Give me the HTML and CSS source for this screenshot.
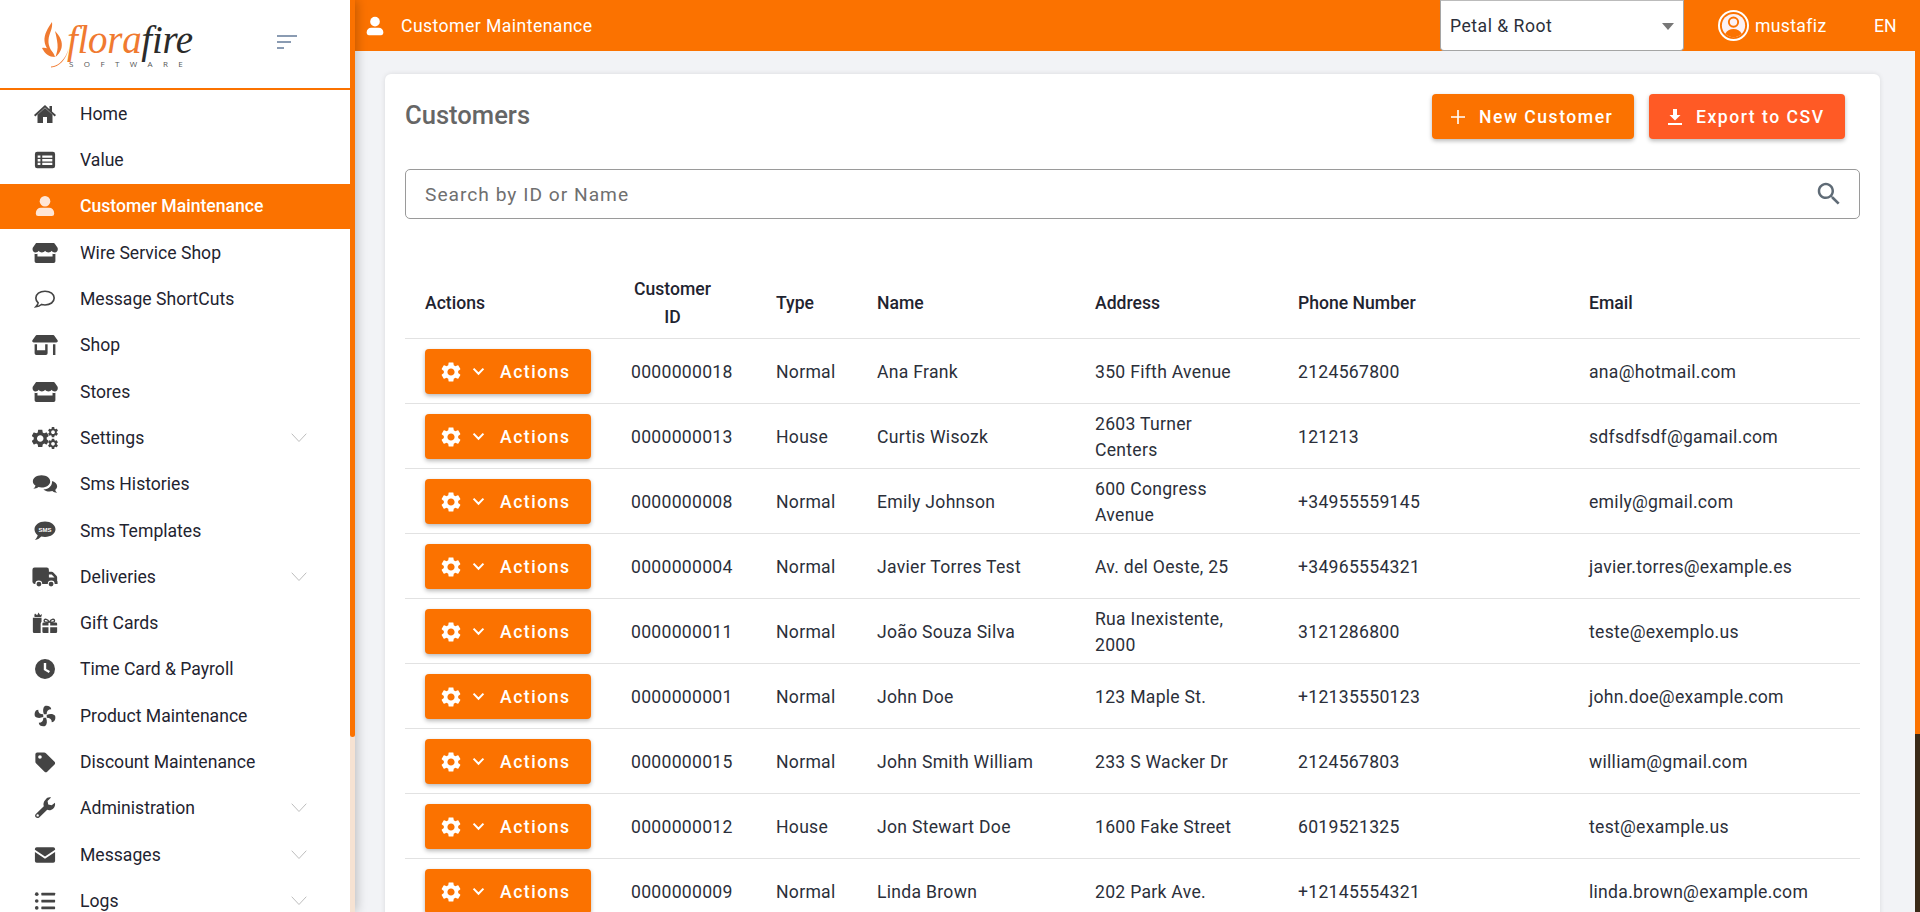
FILE: index.html
```html
<!DOCTYPE html>
<html lang="en">
<head>
<meta charset="utf-8">
<title>Customer Maintenance</title>
<link rel="stylesheet" href="styles.css">
</head>
<body>
<svg class="defs" aria-hidden="true">
  <symbol id="gear" viewBox="0 0 24 24"><path d="M19.14 12.94c.04-.3.06-.61.06-.94 0-.32-.02-.64-.07-.94l2.03-1.58c.18-.14.23-.41.12-.61l-1.92-3.32c-.12-.22-.37-.29-.59-.22l-2.39.96c-.5-.38-1.03-.7-1.62-.94l-.36-2.54c-.04-.24-.24-.41-.48-.41h-3.84c-.24 0-.43.17-.47.41l-.36 2.54c-.59.24-1.13.57-1.62.94l-2.39-.96c-.22-.08-.47 0-.59.22L2.74 8.87c-.12.21-.08.47.12.61l2.03 1.58c-.05.3-.09.63-.09.94s.02.64.07.94l-2.03 1.58c-.18.14-.23.41-.12.61l1.92 3.32c.12.22.37.29.59.22l2.39-.96c.5.38 1.03.7 1.62.94l.36 2.54c.05.24.24.41.48.41h3.84c.24 0 .44-.17.47-.41l.36-2.54c.59-.24 1.13-.56 1.62-.94l2.39.96c.22.08.47 0 .59-.22l1.92-3.32c.12-.22.07-.47-.12-.61l-2.01-1.58zM12 15.6c-1.98 0-3.6-1.62-3.6-3.6s1.62-3.6 3.6-3.6 3.6 1.62 3.6 3.6-1.62 3.6-3.6 3.6z"/></symbol>
  <symbol id="home" viewBox="0 0 24 24"><path d="M10 21v-6h4v6h5.500v-8.200L12 6 4.500 12.800V21zM12 3 1 13l1.300 1.400L12 5.600l9.700 8.800L23 13l-4-3.600V4h-2.500v3.200z"/></symbol>
  <symbol id="listalt" viewBox="0 0 24 24"><path fill-rule="evenodd" d="M3.500 3h17A2.500 2.500 0 0 1 23 5.500v13a2.500 2.500 0 0 1-2.500 2.500h-17A2.500 2.500 0 0 1 1 18.500v-13A2.500 2.500 0 0 1 3.500 3zM4 7v2.500h3V7zm5 0v2.500h11V7zm-5 4v2.500h3V11zm5 0v2.500h11V11zm-5 4v2.500h3V15zm5 0v2.500h11V15z"/></symbol>
  <symbol id="person" viewBox="0 0 24 24"><circle cx="12" cy="6.800" r="5.800"/><path d="M7.500 14h9a5.500 5.500 0 0 1 5.500 5.500v1A2.500 2.500 0 0 1 19.500 23h-15A2.500 2.500 0 0 1 2 20.500v-1A5.500 5.500 0 0 1 7.500 14z"/></symbol>
  <symbol id="store" viewBox="0 0 30 24"><path d="M5 .5h20a1.500 1.500 0 0 1 1.300.7L29.500 6c.9 2.600-.6 5.300-3 5.500-1.700.1-3-.7-3.800-2-.8 1.300-2.200 2-3.700 2s-3-.8-3.900-2c-.8 1.200-2.200 2-3.700 2s-2.900-.8-3.700-2c-.8 1.300-2.100 2.100-3.800 2-2.400-.2-3.900-2.900-3-5.500l3.200-4.800A1.500 1.500 0 0 1 5 .5z"/><path d="M3 13c1 .3 2.300.3 3.300-.1V16h17.400v-3.100c1 .4 2.300.4 3.300.1v8.500a2 2 0 0 1-2 2H5a2 2 0 0 1-2-2z"/></symbol>
  <symbol id="shop" viewBox="0 0 30 24"><path d="M5.500 .5h19a1.500 1.500 0 0 1 1.300.7l3.700 5.300c.6 1.300 0 2.500-1.500 2.500H2c-1.500 0-2.100-1.200-1.500-2.500l3.700-5.300A1.500 1.500 0 0 1 5.500 .5z"/><path d="M3 11h2.800v7.200h9.400V11H18v10.500a2 2 0 0 1-2 2H5a2 2 0 0 1-2-2zM24.200 11H27v12.500h-2.800z"/></symbol>
  <symbol id="comment" viewBox="0 0 24 24"><path fill="none" stroke="currentColor" stroke-width="1.800" d="M12 3.500c5.800 0 10 3.200 10 7.500s-4.200 7.500-10 7.500c-1.400 0-2.700-.2-3.900-.5-1.500 1.300-3.600 2.300-6.100 2.500 1.300-1.300 2.200-2.700 2.500-4.300C3 14.800 2 13 2 11c0-4.300 4.200-7.500 10-7.500z"/></symbol>
  <symbol id="cogs" viewBox="0 0 30 24"><svg x="-3" y="0" width="25" height="25" viewBox="0 0 24 24"><use href="#gear"/></svg><svg x="17" y="-2" width="14.500" height="14.500" viewBox="0 0 24 24"><use href="#gear"/></svg><svg x="17" y="11.500" width="14.500" height="14.500" viewBox="0 0 24 24"><use href="#gear"/></svg></symbol>
  <symbol id="comments" viewBox="0 0 30 24"><path d="M11 2c6 0 10 3.200 10 7s-4 7-10 7c-1.300 0-2.400-.2-3.500-.5C6 16.700 4 17.500 1.500 17.500 3 16.300 3.800 15 4 13.700 2.200 12.500 1 10.800 1 9c0-3.800 4-7 10-7z"/><path d="M23 8.500c3.400 1 6 3.300 6 6.200 0 1.600-.8 3-2.200 4.100.2 1.100 1 2.300 2.200 3.400-2.300 0-4.200-.9-5.500-2-1 .3-2.200.5-3.300.5-2.900 0-5.400-.9-7.100-2.400 6.300-.2 10.900-4.300 9.900-10.300z"/></symbol>
  <symbol id="truck" viewBox="0 0 30 24"><path d="M3 1h14a2.500 2.500 0 0 1 2.500 2.500V6h3.300c.7 0 1.300.3 1.800.8l3.600 3.700c.5.500.8 1.200.8 1.800V17h.5v3h-3.300a4 4 0 0 0-8 0h-6.400a4 4 0 0 0-8 0H3a2.500 2.500 0 0 1-2.500-2.500v-14A2.500 2.500 0 0 1 3 1zm16.500 8v3.500H26L22.700 9z"/><circle cx="8" cy="20.200" r="2.800"/><circle cx="22" cy="20.200" r="2.800"/></symbol>
  <symbol id="gifts" viewBox="0 0 30 24"><path d="M1 6h10v4.500c-.6.700-1 1.500-1 2.500v10.500H2.500A1.500 1.500 0 0 1 1 22z"/><path d="M3 5c-.5-1.500-.3-3 .5-4l2.500 2 1.500-3 2 3 1.500-1.500c.4 1.300.3 2.500-.5 3.500z"/><path d="M12 17h7v6.500h-5.500A1.500 1.500 0 0 1 12 22zM21 17h8v5a1.500 1.500 0 0 1-1.500 1.500H21zM12 13a1.500 1.500 0 0 1 1.500-1.500H19V15h-7zM21 11.500h6.500A1.500 1.500 0 0 1 29 13v2h-8z"/><path fill="none" stroke="currentColor" stroke-width="1.600" d="M19.800 11c-1.500-3.800-5.500-4.300-5.800-1.800-.2 1.800 3 2.300 5.800 1.800zM20.200 11c1.500-3.800 5.500-4.300 5.800-1.800.2 1.800-3 2.300-5.800 1.800z"/></symbol>
  <symbol id="clock" viewBox="0 0 24 24"><path fill-rule="evenodd" d="M12 2a10 10 0 1 1 0 20 10 10 0 0 1 0-20zm-1.200 4v7l5 3 1.200-1.900-3.800-2.200V6z"/></symbol>
  <symbol id="fan" viewBox="0 0 24 24"><path d="M10.800 10.200C9.500 6.500 9.500 3 11.800 1c3-.9 7 .2 7 3.600-3.300 0-5 1.900-5 5.400z"/><path d="M13.800 10.800c3.700-1.300 7.200-1.300 9.200 1 .9 3-.2 7-3.600 7 0-3.300-1.900-5-5.400-5zM13.200 13.800c1.300 3.700 1.300 7.200-1 9.200-3 .9-7-.2-7-3.600 3.300 0 5-1.900 5-5.400zM10.200 13.200c-3.700 1.300-7.200 1.300-9.200-1-.9-3 .2-7 3.600-7 0 3.300 1.900 5 5.400 5z"/></symbol>
  <symbol id="tag" viewBox="0 0 24 24"><path fill-rule="evenodd" d="M3.500 1.500H11c.8 0 1.500.3 2 .9l9.400 9.400c.8.8.8 2.100 0 2.900l-8 8c-.8.800-2.100.8-2.900 0L2.400 13.600c-.6-.5-.9-1.200-.9-2V3.500a2 2 0 0 1 2-2zM6.500 4.500a2 2 0 1 0 0 4 2 2 0 0 0 0-4z"/></symbol>
  <symbol id="wrench" viewBox="0 0 24 24"><path fill-rule="evenodd" d="M22.800 6.200c.6 2.200 0 4.600-1.700 6.300-1.800 1.800-4.400 2.400-6.700 1.500l-8.700 8.300c-1.100 1-2.800 1-3.800-.1-1-1-1-2.700.1-3.700l8.700-8.400c-.9-2.400-.2-5 1.600-6.800C14 .6 16.400 0 18.600.6l-3.800 3.800.7 3.800 3.800.7zM4 18.800a1.300 1.300 0 1 0 0 2.600 1.300 1.300 0 0 0 0-2.600z"/></symbol>
  <symbol id="mail" viewBox="0 0 24 24"><path d="M3 3.500h18A2 2 0 0 1 23 5.500v.7L12 13.500 1 6.200v-.7a2 2 0 0 1 2-2zM1 8.700l11 7.300 11-7.300v9.800a2 2 0 0 1-2 2H3a2 2 0 0 1-2-2z"/></symbol>
  <symbol id="list" viewBox="0 0 24 24"><circle cx="3" cy="4.500" r="2"/><circle cx="3" cy="12" r="2"/><circle cx="3" cy="19.500" r="2"/><rect x="8" y="3" width="15" height="3" rx=".5"/><rect x="8" y="10.500" width="15" height="3" rx=".5"/><rect x="8" y="18" width="15" height="3" rx=".5"/></symbol>
  <symbol id="chev" viewBox="0 0 16 10"><path fill="none" stroke="currentColor" stroke-width="1" d="M.7 .7 8 8.500 15.300 .7"/></symbol>
  <symbol id="chevbold" viewBox="0 0 14 10"><path fill="none" stroke="currentColor" stroke-width="2.200" d="M1.500 1.800 7 7.500l5.500-5.700"/></symbol>
  <symbol id="plus" viewBox="0 0 14 14"><path d="M6.200 0h1.600v6.200H14v1.600H7.800V14H6.200V7.800H0V6.200h6.200z"/></symbol>
  <symbol id="download" viewBox="0 0 14 16"><path d="M5 0h4v6h3.500L7 11.500 1.500 6H5zM0 14h14v2H0z"/></symbol>
  <symbol id="search" viewBox="0 0 24 24"><path d="M15.500 14h-.79l-.28-.27C15.410 12.590 16 11.110 16 9.500 16 5.910 13.090 3 9.500 3S3 5.910 3 9.500 5.910 16 9.500 16c1.610 0 3.090-.59 4.230-1.570l.27.28v.79l5 4.990L20.490 19l-4.990-5zm-6 0C7.010 14 5 11.990 5 9.500S7.010 5 9.500 5 14 7.010 14 9.500 11.990 14 9.500 14z"/></symbol>
</svg>

<div class="app">
  <aside class="sidebar">
    <div class="side-body">
      <div class="brand">
        <div class="logo">
          <svg class="flame" viewBox="0 0 27 46"><path d="M10 0C6 6 2 12 2.500 19 3 25 7 30 12 33 9 28 6 24 6.500 18 7 11 11 7 10 0z"/><path d="M13 9c5 5 8 11 6.500 17-1 4-3.500 7-6 9 1.500-5 2.500-8 2-13-.5-5-1.500-9-2.500-13z"/><path d="M0 26c5-1 11 2 13 9-6 0-10-3-13-9z"/><path d="M9 44.500c6-.5 12-4.500 16-13.500l1.500-4C24 38 17 45 9 45.500z"/></svg>
          <div class="logo-words">
            <div class="logo-name"><span class="flora">flora</span><span class="fire">fire</span></div>
            <div class="logo-sub">SOFTWARE</div>
          </div>
        </div>
        <div class="toggler"><span class="bar-a"></span><span class="bar-b"></span><span class="bar-c"></span></div>
      </div>
      <nav class="menu">
        <a class="item"><span class="ico"><svg class="i24"><use href="#home"/></svg></span><span class="label">Home</span></a>
        <a class="item"><span class="ico"><svg class="i22"><use href="#listalt"/></svg></span><span class="label">Value</span></a>
        <a class="item active"><span class="ico"><svg class="i22"><use href="#person"/></svg></span><span class="label">Customer Maintenance</span></a>
        <a class="item"><span class="ico"><svg class="i-wide"><use href="#store"/></svg></span><span class="label">Wire Service Shop</span></a>
        <a class="item"><span class="ico"><svg class="i22"><use href="#comment"/></svg></span><span class="label">Message ShortCuts</span></a>
        <a class="item"><span class="ico"><svg class="i-wide"><use href="#shop"/></svg></span><span class="label">Shop</span></a>
        <a class="item"><span class="ico"><svg class="i-wide"><use href="#store"/></svg></span><span class="label">Stores</span></a>
        <a class="item"><span class="ico"><svg class="i-wide"><use href="#cogs"/></svg></span><span class="label">Settings</span><svg class="chev"><use href="#chev"/></svg></a>
        <a class="item"><span class="ico"><svg class="i-wide"><use href="#comments"/></svg></span><span class="label">Sms Histories</span></a>
        <a class="item"><span class="ico"><svg class="i24" viewBox="0 0 24 24"><path d="M12 2.500c5.800 0 10.500 3.500 10.500 7.800S17.800 18 12 18c-1.300 0-2.500-.2-3.700-.5C6.800 19 5 20.500 1.800 21c1.400-1.300 2.500-3 2.900-4.800-2-1.400-3.200-3.500-3.200-5.900 0-4.300 4.700-7.800 10.500-7.800z"/><text x="12" y="12.700" text-anchor="middle" class="smstext">SMS</text></svg></span><span class="label">Sms Templates</span></a>
        <a class="item"><span class="ico"><svg class="i-wide"><use href="#truck"/></svg></span><span class="label">Deliveries</span><svg class="chev"><use href="#chev"/></svg></a>
        <a class="item"><span class="ico"><svg class="i-wide"><use href="#gifts"/></svg></span><span class="label">Gift Cards</span></a>
        <a class="item"><span class="ico"><svg class="i24"><use href="#clock"/></svg></span><span class="label">Time Card &amp; Payroll</span></a>
        <a class="item"><span class="ico"><svg class="i22"><use href="#fan"/></svg></span><span class="label">Product Maintenance</span></a>
        <a class="item"><span class="ico"><svg class="i22"><use href="#tag"/></svg></span><span class="label">Discount Maintenance</span></a>
        <a class="item"><span class="ico"><svg class="i22"><use href="#wrench"/></svg></span><span class="label">Administration</span><svg class="chev"><use href="#chev"/></svg></a>
        <a class="item"><span class="ico"><svg class="i22"><use href="#mail"/></svg></span><span class="label">Messages</span><svg class="chev"><use href="#chev"/></svg></a>
        <a class="item"><span class="ico"><svg class="i22"><use href="#list"/></svg></span><span class="label">Logs</span><svg class="chev"><use href="#chev"/></svg></a>
      </nav>
    </div>
    <div class="side-scroll"><div class="side-thumb"></div></div>
  </aside>

  <div class="main">
    <header class="topbar">
      <svg class="top-ico"><use href="#person"/></svg>
      <span class="top-title">Customer Maintenance</span>
      <div class="shop-select"><span>Petal &amp; Root</span><i class="caret"></i></div>
      <div class="user">
        <svg class="avatar" viewBox="0 0 32 32"><circle cx="16" cy="16" r="15" class="av-ring"/><circle cx="16" cy="16" r="12" class="av-fill"/><path class="av-body" d="M7.500 24.500c1.500-3.500 4.700-5 8.500-5s7 1.500 8.500 5c-2.200 2.200-5.200 3.500-8.500 3.500s-6.300-1.300-8.500-3.500z"/><circle cx="16" cy="12.500" r="4.800" class="av-head"/></svg>
        <span>mustafiz</span>
      </div>
      <span class="lang">EN</span>
    </header>

    <section class="content">
      <div class="card">
        <div class="card-head">
          <h1 class="card-title">Customers</h1>
          <button class="btn btn-orange"><svg class="btn-ico"><use href="#plus"/></svg>New Customer</button>
          <button class="btn btn-red"><svg class="btn-ico"><use href="#download"/></svg>Export to CSV</button>
        </div>
        <div class="search">
          <input class="search-input" type="text" placeholder="Search by ID or Name">
          <svg class="search-ico"><use href="#search"/></svg>
        </div>
        <table class="table">
          <colgroup><col class="c1"><col class="c2"><col class="c3"><col class="c4"><col class="c5"><col class="c6"><col class="c7"></colgroup>
          <thead>
            <tr><th>Actions</th><th><span class="cid">Customer<br>ID</span></th><th>Type</th><th>Name</th><th>Address</th><th>Phone Number</th><th>Email</th></tr>
          </thead>
          <tbody>
            <tr><td><button class="act"><svg class="act-gear"><use href="#gear"/></svg><svg class="act-chev"><use href="#chevbold"/></svg>Actions</button></td><td>0000000018</td><td>Normal</td><td>Ana Frank</td><td><div class="addr">350 Fifth Avenue</div></td><td>2124567800</td><td>ana@hotmail.com</td></tr>
            <tr><td><button class="act"><svg class="act-gear"><use href="#gear"/></svg><svg class="act-chev"><use href="#chevbold"/></svg>Actions</button></td><td>0000000013</td><td>House</td><td>Curtis Wisozk</td><td><div class="addr">2603 Turner Centers</div></td><td>121213</td><td>sdfsdfsdf@gamail.com</td></tr>
            <tr><td><button class="act"><svg class="act-gear"><use href="#gear"/></svg><svg class="act-chev"><use href="#chevbold"/></svg>Actions</button></td><td>0000000008</td><td>Normal</td><td>Emily Johnson</td><td><div class="addr">600 Congress Avenue</div></td><td>+34955559145</td><td>emily@gmail.com</td></tr>
            <tr><td><button class="act"><svg class="act-gear"><use href="#gear"/></svg><svg class="act-chev"><use href="#chevbold"/></svg>Actions</button></td><td>0000000004</td><td>Normal</td><td>Javier Torres Test</td><td><div class="addr">Av. del Oeste, 25</div></td><td>+34965554321</td><td>javier.torres@example.es</td></tr>
            <tr><td><button class="act"><svg class="act-gear"><use href="#gear"/></svg><svg class="act-chev"><use href="#chevbold"/></svg>Actions</button></td><td>0000000011</td><td>Normal</td><td>João Souza Silva</td><td><div class="addr">Rua Inexistente, 2000</div></td><td>3121286800</td><td>teste@exemplo.us</td></tr>
            <tr><td><button class="act"><svg class="act-gear"><use href="#gear"/></svg><svg class="act-chev"><use href="#chevbold"/></svg>Actions</button></td><td>0000000001</td><td>Normal</td><td>John Doe</td><td><div class="addr">123 Maple St.</div></td><td>+12135550123</td><td>john.doe@example.com</td></tr>
            <tr><td><button class="act"><svg class="act-gear"><use href="#gear"/></svg><svg class="act-chev"><use href="#chevbold"/></svg>Actions</button></td><td>0000000015</td><td>Normal</td><td>John Smith William</td><td><div class="addr">233 S Wacker Dr</div></td><td>2124567803</td><td>william@gmail.com</td></tr>
            <tr><td><button class="act"><svg class="act-gear"><use href="#gear"/></svg><svg class="act-chev"><use href="#chevbold"/></svg>Actions</button></td><td>0000000012</td><td>House</td><td>Jon Stewart Doe</td><td><div class="addr">1600 Fake Street</div></td><td>6019521325</td><td>test@example.us</td></tr>
            <tr><td><button class="act"><svg class="act-gear"><use href="#gear"/></svg><svg class="act-chev"><use href="#chevbold"/></svg>Actions</button></td><td>0000000009</td><td>Normal</td><td>Linda Brown</td><td><div class="addr">202 Park Ave.</div></td><td>+12145554321</td><td>linda.brown@example.com</td></tr>
          </tbody>
        </table>
      </div>
    </section>
  </div>
  <div class="page-scroll"><div class="page-thumb"></div></div>
</div>
</body>
</html>
```

FILE: styles.css
```css
* { box-sizing: border-box; }
html, body { margin: 0; height: 100%; overflow: hidden; }
body { font-family: Roboto, "Liberation Sans", sans-serif; font-size: 17.6px; color: #1f2430; background: #f2f3f6; }
button { font-family: inherit; border: 0; cursor: pointer; }

.defs { position: absolute; width: 0; height: 0; overflow: hidden; }
.smstext { font: 700 6px "Liberation Sans", sans-serif; fill: #fff; }

.app { display: flex; height: 912px; overflow: hidden; }

/* sidebar */
.sidebar { display: flex; flex: 0 0 355px; height: 912px; background: #fff; box-shadow: 2px 0 10px rgba(0,0,0,.22); position: relative; z-index: 2; }
.side-body { width: 350px; flex: 0 0 350px; overflow: hidden; }
.side-scroll { flex: 0 0 5px; background: #f6e2d2; }
.side-thumb { height: 737px; background: #fb7200; border-radius: 0 0 3px 3px; }
.brand { height: 90px; border-bottom: 2px solid #fb7200; display: flex; align-items: flex-start; padding-left: 42px; }
.logo { display: flex; width: 235px; padding-top: 22px; }
.flame { width: 27px; height: 46px; fill: #f07a30; flex: 0 0 27px; }
.logo-words { margin-left: -2px; }
.logo-name { font: italic 400 39px/36px "Liberation Serif", serif; letter-spacing: -.3px; height: 37px; white-space: nowrap; }
.flora { color: #f07a30; }
.fire { color: #2b2b2b; }
.logo-sub { font: 400 8px/9px "Open Sans", sans-serif; letter-spacing: 10.400px; color: #555; white-space: nowrap; margin-left: 2px; }
.toggler { display: flex; flex-direction: column; gap: 4px; margin-top: 35px; }
.toggler span { display: block; height: 2px; background: #8a9bb2; }
.bar-a { width: 20px; }
.bar-b { width: 14px; }
.bar-c { width: 7px; }

.menu { padding-top: 1.4px; }
.item { display: flex; align-items: center; height: 45px; margin-bottom: 1.3px; color: #1f2430; }
.ico { flex: 0 0 80px; display: flex; justify-content: center; padding-left: 10px; }
.ico svg { display: block; fill: #444; color: #444; }
.i24 { width: 24px; height: 24px; }
.i22 { width: 22px; height: 22px; }
.i-wide { width: 26px; height: 22px; }
.label { flex: 1; }
.chev { width: 16px; height: 10px; color: #bdbdbd; margin-right: 43px; }
.item.active { background: #fb7200; color: #fff; font-weight: 500; }
.item.active .ico svg { fill: #ffe6d6; }

/* main */
.main { flex: 1; min-width: 0; display: flex; flex-direction: column; }
.page-scroll { flex: 0 0 5px; background: #3a2a18; }
.page-thumb { height: 734px; background: #fb7200; }

.topbar { height: 51px; flex: 0 0 51px; background: #fb7200; color: #fff; display: flex; align-items: center; padding-left: 10px; }
.top-ico { width: 20px; height: 20px; fill: #fff; }
.top-title { margin-left: 16px; flex: 1; letter-spacing: .45px; }
.shop-select { width: 244px; height: 51px; background: #fff; border: 1px solid #a5a5a5; border-top-color: #bbb; border-radius: 0 0 4px 4px; color: #2b2f3a; display: flex; align-items: center; justify-content: space-between; padding: 0 9px; letter-spacing: .5px; }
.caret { width: 0; height: 0; border-left: 6.500px solid transparent; border-right: 6.500px solid transparent; border-top: 7px solid #777; margin-top: 2px; }
.user { display: flex; align-items: center; margin-left: 34px; width: 156px; gap: 6px; letter-spacing: .35px; }
.avatar { width: 31px; height: 31px; flex: 0 0 31px; }
.av-ring { fill: none; stroke: #fff; stroke-width: 2; }
.av-fill { fill: #fbf1f5; }
.av-head { fill: #fbf1f5; stroke: #fb7200; stroke-width: 2; }
.av-body { fill: #fb7200; }
.lang { width: 41px; }

.content { flex: 1; min-height: 0; padding: 23px 35px 0 30px; }
.card { height: 900px; background: #fff; border-radius: 6px; padding: 20px 20px 0; box-shadow: 0 0 5px rgba(0,0,0,.1); }
.card-head { display: flex; align-items: center; padding-right: 15px; gap: 15px; }
.card-title { flex: 1; margin: 0 0 4px; font-size: 25.600px; font-weight: 500; color: #666; }
.btn { display: flex; align-items: center; height: 45px; border-radius: 4px; color: #fff; font-size: 17.600px; font-weight: 500; letter-spacing: 1.500px; box-shadow: 0 2px 4px rgba(0,0,0,.28); }
.btn-orange { width: 202px; background: #fb7200; padding-left: 19px; gap: 14px; }
.btn-red { width: 196px; background: #ff5a25; padding-left: 19px; gap: 14px; }
.btn-ico { width: 14px; height: 16px; fill: #fff; }

.search { display: flex; align-items: center; height: 50px; margin-top: 30px; border: 1px solid #9a9a9a; border-radius: 5px; padding: 0 15px 0 19px; }
.search-input { flex: 1; border: 0; outline: 0; padding: 0; background: transparent; font: 400 19.200px Roboto, sans-serif; letter-spacing: 1px; color: #333; }
.search-input::placeholder { color: #6f6f6f; opacity: 1; }
.search-ico { width: 30px; height: 30px; fill: #5f6b76; }

.table { width: 1455px; table-layout: fixed; border-collapse: collapse; margin-top: 48px; }
.c1 { width: 206px; } .c2 { width: 145px; } .c3 { width: 101px; } .c4 { width: 218px; }
.c5 { width: 203px; } .c6 { width: 291px; } .c7 { width: 291px; }
.table th { height: 71px; padding: 2px 20px 0; text-align: left; font-weight: 500; font-size: 17.600px; line-height: 28px; color: #1f2430; border-bottom: 1px solid #e2e2e2; }
.table td { height: 65px; padding: 2px 20px 0; line-height: 26px; letter-spacing: .28px; border-bottom: 1px solid #e2e2e2; color: #2b2f3a; }
.cid { display: inline-block; width: 83px; text-align: center; }
.addr { max-width: 150px; }
.act { display: flex; align-items: center; width: 166px; height: 45px; padding-left: 17px; background: #fb7200; color: #fff; border-radius: 4px; font-size: 17.600px; font-weight: 500; letter-spacing: 1.500px; box-shadow: 0 2px 4px rgba(0,0,0,.28); }
.act-gear { width: 24px; height: 24px; fill: #fff; margin-left: -3px; }
.act-chev { width: 13px; height: 9px; color: #fff; margin: 0 15px 0 9px; }
```
